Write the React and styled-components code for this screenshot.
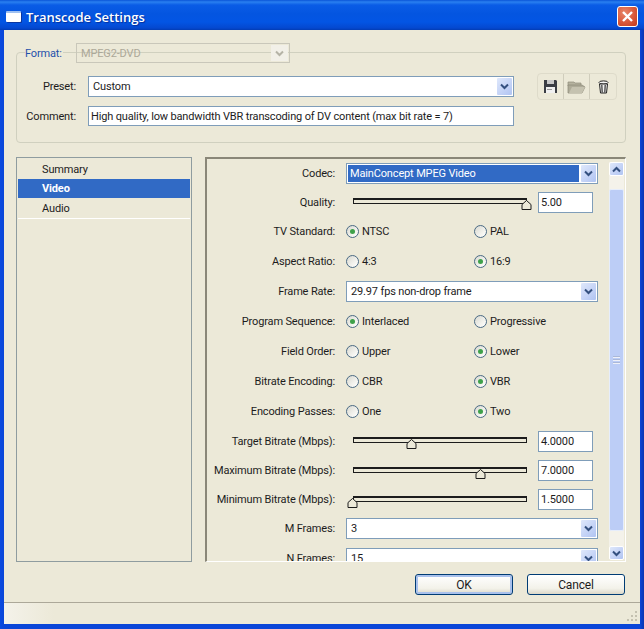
import React from 'react';
import styled, { createGlobalStyle } from 'styled-components';

const GlobalStyle = createGlobalStyle`
  * { box-sizing: border-box; }
  html, body { margin: 0; padding: 0; background: #0a3fc4; }
  body { font-family: Roboto, "Liberation Sans", Arial, sans-serif; font-size: 11px; letter-spacing: -0.15px; color: #1c1c1c; }
`;

const Window = styled.div`
  width: 644px;
  height: 629px;
  display: flex;
  flex-direction: column;
  overflow: hidden;
  background: linear-gradient(90deg, #0a4ae0 0, #0a46d8 4px, #0a46d8 640px, #0a36b0 644px);
`;

const TitleBar = styled.div`
  height: 30px;
  flex: none;
  display: flex;
  align-items: center;
  padding: 3px 6px 0 6px;
  background: linear-gradient(180deg, #0a55d8 0, #2a80f0 2px, #0a5ce6 5px, #0455e0 14px, #0355e4 22px, #0448d0 28px, #033cb4 30px);
`;

const TitleIcon = styled.div`
  width: 15px;
  height: 11px;
  margin-top: -1px;
  background: #fff;
  border-top: 2px solid #9fc0f0;
  border-radius: 1px;
  box-shadow: 1px 1px 0 #0a36a0;
`;

const TitleText = styled.div`
  margin-left: 5px;
  flex: 1;
  font-family: "Open Sans", sans-serif;
  font-weight: 600;
  font-size: 13px;
  letter-spacing: 0;
  color: #fff;
  text-shadow: 1px 1px 1px #06309a;
`;

const CloseButton = styled.div`
  width: 21px;
  height: 21px;
  border: 1px solid #fff;
  border-radius: 3px;
  background: radial-gradient(circle at 35% 30%, #e8876a 0, #d9583a 55%, #bf3a1c 100%);
  display: flex;
  align-items: center;
  justify-content: center;
`;

const Client = styled.div`
  flex: 1;
  margin: 0 4px 5px 4px;
  display: flex;
  flex-direction: column;
  padding-top: 22px;
  background: #ece9d8;
`;

const Group = styled.div`
  height: 91px;
  margin: 0 14px 0 12px;
  flex: none;
  border: 1px solid #d0d0bf;
  border-radius: 4px;
  display: flex;
  flex-direction: column;
`;

const FormatRow = styled.div`
  height: 20px;
  margin-top: -10px;
  padding-left: 8px;
  display: flex;
  align-items: center;
`;

const FormatLabel = styled.div`
  width: 51px;
  color: #1f50ab;
`;

const FormatLabelText = styled.span`
  background: #ece9d8;
  padding-right: 1px;
`;

const DisabledCombo = styled.div`
  width: 214px;
  height: 20px;
  border: 1px solid #c9c7ba;
  display: flex;
  align-items: center;
  justify-content: space-between;
  padding: 0 1px 0 4px;
  color: #aca899;
`;

const DisabledArrow = styled.div`
  width: 17px;
  height: 16px;
  background: #f2f0e8;
  display: flex;
  align-items: center;
  justify-content: center;
`;

const GroupBody = styled.div`
  display: flex;
  margin-top: 13px;
`;

const GroupFields = styled.div`
  display: flex;
  flex-direction: column;
  gap: 9px;
`;

const FieldRow = styled.div`
  display: flex;
  align-items: center;
`;

const GroupLabel = styled.div`
  width: 59px;
  margin-right: 12px;
  text-align: right;
`;

const Combo = styled.div`
  width: ${(p) => p.$w || 252}px;
  height: ${(p) => p.$h || 21}px;
  flex: none;
  background: #fff;
  border: 1px solid #7f9db9;
  display: flex;
  align-items: center;
  padding: 1px;
`;

const ComboText = styled.div`
  flex: 1;
  height: 100%;
  margin-right: 2px;
  padding-left: ${(p) => (p.$selected ? 2 : 3)}px;
  display: flex;
  align-items: center;
  white-space: nowrap;
  background: ${(p) => (p.$selected ? '#316ac5' : 'transparent')};
  color: ${(p) => (p.$selected ? '#fff' : '#1c1c1c')};
`;

const ComboArrow = styled.div`
  width: 15px;
  height: 100%;
  flex: none;
  border-radius: 1px;
  background: linear-gradient(135deg, #dfe8fb 0, #c3d2f6 60%, #b0c4f2 100%);
  display: flex;
  align-items: center;
  justify-content: center;
`;

const TextBox = styled.div`
  width: ${(p) => p.$w || 426}px;
  height: ${(p) => p.$h || 20}px;
  flex: none;
  background: #fff;
  border: 1px solid #7f9db9;
  padding-left: 2px;
  display: flex;
  align-items: center;
  white-space: nowrap;
`;

const Toolbar = styled.div`
  width: 80px;
  height: 27px;
  margin: -3px 0 0 23px;
  display: flex;
  border: 1px solid #dedbca;
  border-radius: 4px;
`;

const ToolButton = styled.div`
  width: 26px;
  flex: none;
  display: flex;
  align-items: center;
  justify-content: center;
  &:first-child { width: 25px; }
  &:last-child { width: 27px; }
  & + & { border-left: 1px solid #d0cdbc; }
`;

const Main = styled.div`
  height: 405px;
  flex: none;
  margin: 14px 14px 0 12px;
  display: flex;
  gap: 13px;
`;

const NavList = styled.div`
  width: 176px;
  flex: none;
  border: 1px solid #8f9c9f;
  padding: 1px;
`;

const NavItem = styled.div`
  height: ${(p) => p.$h || 20}px;
  padding-left: 24px;
  padding-top: ${(p) => (p.$last ? 1 : 0)}px;
  display: flex;
  align-items: center;
  font-weight: ${(p) => (p.$active ? 700 : 400)};
  color: ${(p) => (p.$active ? '#fff' : '#1c1c1c')};
  background: ${(p) => (p.$active ? '#316ac5' : 'transparent')};
  border-bottom: ${(p) => (p.$last ? '1px solid #fff' : 'none')};
`;

const Panel = styled.div`
  flex: 1;
  display: flex;
  overflow: hidden;
  border-top: 2px solid #8a8778;
  border-left: 2px solid #8a8778;
  border-bottom: 1px solid #fff;
  border-right: 1px solid #fff;
`;

const PanelContent = styled.div`
  width: 391px;
  flex: none;
  overflow: hidden;
`;

const Row = styled.div`
  height: ${(p) => p.$h || 30}px;
  display: flex;
  align-items: center;
`;

const RowLabel = styled.div`
  width: 128px;
  margin-right: 11px;
  flex: none;
  text-align: right;
  white-space: nowrap;
`;

const RadioColumns = styled.div`
  display: grid;
  grid-template-columns: 128px 128px;
`;

const RadioOption = styled.div`
  display: flex;
  align-items: center;
  gap: 3px;
`;

const RadioCircle = styled.div`
  width: 13px;
  height: 13px;
  border-radius: 50%;
  border: 1px solid #4a6a84;
  background: linear-gradient(135deg, #d8d8d0 0, #f6f6f2 70%, #fff 100%);
  display: flex;
  align-items: center;
  justify-content: center;
  &::after {
    content: '';
    display: ${(p) => (p.$on ? 'block' : 'none')};
    width: 5px;
    height: 5px;
    border-radius: 50%;
    background: #3fa14a;
  }
`;

const SliderWrap = styled.div`
  display: flex;
  align-items: center;
  width: 252px;
`;

const SliderTrack = styled.div`
  position: relative;
  width: 174px;
  height: 6px;
  margin: -2px 11px 0 7px;
  flex: none;
  border: 1px solid #1c1c1c;
  border-top-width: 2px;
  background: #ece9d8;
`;

const SliderThumb = styled.svg`
  position: absolute;
  top: 0;
  width: 11px;
  height: 10px;
  margin-left: -5px;
`;

const ScrollBar = styled.div`
  width: 15px;
  flex: none;
  margin: 3px 0 2px 11px;
  display: flex;
  flex-direction: column;
  background: #f4f2ea;
`;

const ScrollButton = styled.div`
  height: 14px;
  flex: none;
  border: 1px solid #fff;
  border-radius: 2px;
  background: linear-gradient(135deg, #dfe8fb 0, #c3d2f6 60%, #b0c4f2 100%);
  display: flex;
  align-items: center;
  justify-content: center;
`;

const ScrollThumb = styled.div`
  height: 342px;
  margin: 13px 0 15px;
  flex: none;
  border-radius: 2px;
  border: 1px solid #e6edfb;
  background: #bccdf6;
  display: flex;
  align-items: center;
  justify-content: center;
`;

const Grip = styled.div`
  width: 7px;
  height: 8px;
  background-image: repeating-linear-gradient(0deg, #eef0f8 0 1px, #aab8d8 1px 2px, transparent 2px 3px);
`;

const Footer = styled.div`
  flex: none;
  margin-top: 12px;
  padding-right: 15px;
  display: flex;
  justify-content: flex-end;
  gap: 14px;
`;

const DialogButton = styled.div`
  width: 98px;
  height: 21px;
  border: 1px solid #003c74;
  border-radius: 3px;
  background: linear-gradient(180deg, #fff 0, #f3f2ea 70%, #dcd8c8 100%);
  box-shadow: ${(p) => (p.$default ? 'inset 0 0 0 2px #a9c1ec' : 'none')};
  display: flex;
  align-items: center;
  justify-content: center;
  font-size: 12px;
`;

const StatusBar = styled.div`
  flex: 1;
  margin-top: 7px;
  border-top: 1px solid #aca899;
  background: linear-gradient(90deg, #f4f2ea 0, #ece9d8 50px);
  display: flex;
  justify-content: flex-end;
  align-items: flex-end;
  padding: 0 2px 2px 0;
`;

const GripDots = styled.svg`
  width: 12px;
  height: 12px;
`;

const Chevron = ({ color = '#34507f', up }) => (
  <svg width="9" height="7" viewBox="0 0 9 7">
    <path d={up ? 'M1 5.5 L4.5 2 L8 5.5' : 'M1 1.5 L4.5 5 L8 1.5'} fill="none" stroke={color} strokeWidth="2" />
  </svg>
);

const SaveIcon = () => (
  <svg width="15" height="15" viewBox="0 0 15 15">
    <path d="M1 1 H13 L14 2 V14 H1 Z" fill="#3a3d44" />
    <rect x="4" y="1" width="7" height="4" fill="#c8c8c8" />
    <rect x="3" y="8" width="9" height="6" fill="#f0f0f0" />
    <rect x="4" y="10" width="5" height="1" fill="#999" />
  </svg>
);

const FolderIcon = () => (
  <svg width="19" height="14" viewBox="0 0 19 14">
    <path d="M1 2 H7 L8 3 H14 V6 H1 Z" fill="#b5b29f" stroke="#8f8c7c" strokeWidth="0.7" />
    <path d="M1 13 V5 H15 L18 7 L15 13 Z" fill="#aeab98" stroke="#8a8777" strokeWidth="0.7" />
    <path d="M2 13 L5 7 H18 L15 13 Z" fill="#c5c2b0" />
  </svg>
);

const TrashIcon = () => (
  <svg width="11" height="14" viewBox="0 0 11 14">
    <ellipse cx="5.5" cy="2.5" rx="4.5" ry="1.6" fill="#f4f4f4" stroke="#222" strokeWidth="1" />
    <path d="M1.5 4 L2.5 13 H8.5 L9.5 4 Z" fill="#f0f0f0" stroke="#222" strokeWidth="1" />
    <path d="M3.8 5 L4.2 12.5 M7.2 5 L6.8 12.5" stroke="#333" strokeWidth="1.2" />
  </svg>
);

const RadioRow = ({ label, options, value, h }) => (
  <Row $h={h}>
    <RowLabel>{label}</RowLabel>
    <RadioColumns>
      {options.map((o) => (
        <RadioOption key={o}>
          <RadioCircle $on={o === value} />
          {o}
        </RadioOption>
      ))}
    </RadioColumns>
  </Row>
);

const SliderRow = ({ label, pos, value, h }) => (
  <Row $h={h}>
    <RowLabel>{label}</RowLabel>
    <SliderWrap>
      <SliderTrack>
        <SliderThumb viewBox="0 0 11 10" style={{ left: `${pos * 100}%` }}>
          <path d="M5.5 0.5 L10 4.5 V9.5 H1 V4.5 Z" fill="#ece9d8" stroke="#1c1c1c" />
        </SliderThumb>
      </SliderTrack>
      <TextBox $w={55} $h={21}>{value}</TextBox>
    </SliderWrap>
  </Row>
);

const ComboRow = ({ label, value, selected, h }) => (
  <Row $h={h}>
    <RowLabel>{label}</RowLabel>
    <Combo>
      <ComboText $selected={selected}>{value}</ComboText>
      <ComboArrow><Chevron /></ComboArrow>
    </Combo>
  </Row>
);

export default function App() {
  return (
    <>
      <GlobalStyle />
      <Window>
        <TitleBar>
          <TitleIcon />
          <TitleText>Transcode Settings</TitleText>
          <CloseButton>
            <svg width="13" height="13" viewBox="0 0 13 13">
              <path d="M2 2 L11 11 M11 2 L2 11" stroke="#fff" strokeWidth="2.4" />
            </svg>
          </CloseButton>
        </TitleBar>
        <Client>
          <Group>
            <FormatRow>
              <FormatLabel><FormatLabelText>Format:</FormatLabelText></FormatLabel>
              <DisabledCombo>
                MPEG2-DVD
                <DisabledArrow><Chevron color="#b5b3a6" /></DisabledArrow>
              </DisabledCombo>
            </FormatRow>
            <GroupBody>
              <GroupFields>
                <FieldRow>
                  <GroupLabel>Preset:</GroupLabel>
                  <Combo $w={426}>
                    <ComboText>Custom</ComboText>
                    <ComboArrow><Chevron /></ComboArrow>
                  </Combo>
                </FieldRow>
                <FieldRow>
                  <GroupLabel>Comment:</GroupLabel>
                  <TextBox>High quality, low bandwidth VBR transcoding of DV content (max bit rate = 7)</TextBox>
                </FieldRow>
              </GroupFields>
              <Toolbar>
                <ToolButton><SaveIcon /></ToolButton>
                <ToolButton><FolderIcon /></ToolButton>
                <ToolButton><TrashIcon /></ToolButton>
              </Toolbar>
            </GroupBody>
          </Group>
          <Main>
            <NavList>
              <NavItem>Summary</NavItem>
              <NavItem $active $h={19}>Video</NavItem>
              <NavItem $last $h={21}>Audio</NavItem>
            </NavList>
            <Panel>
              <PanelContent>
                <ComboRow h={28} label="Codec:" value="MainConcept MPEG Video" selected />
                <SliderRow label="Quality:" pos={1} value="5.00" />
                <RadioRow h={29} label="TV Standard:" options={['NTSC', 'PAL']} value="NTSC" />
                <RadioRow label="Aspect Ratio:" options={['4:3', '16:9']} value="16:9" />
                <ComboRow h={31} label="Frame Rate:" value="29.97 fps non-drop frame" />
                <RadioRow h={29} label="Program Sequence:" options={['Interlaced', 'Progressive']} value="Interlaced" />
                <RadioRow label="Field Order:" options={['Upper', 'Lower']} value="Lower" />
                <RadioRow label="Bitrate Encoding:" options={['CBR', 'VBR']} value="VBR" />
                <RadioRow label="Encoding Passes:" options={['One', 'Two']} value="Two" />
                <SliderRow label="Target Bitrate (Mbps):" pos={0.33} value="4.0000" />
                <SliderRow h={29} label="Maximum Bitrate (Mbps):" pos={0.733} value="7.0000" />
                <SliderRow h={29} label="Minimum Bitrate (Mbps):" pos={-0.012} value="1.5000" />
                <ComboRow h={29} label="M Frames:" value="3" />
                <ComboRow label="N Frames:" value="15" />
              </PanelContent>
              <ScrollBar>
                <ScrollButton><Chevron up /></ScrollButton>
                <ScrollThumb><Grip /></ScrollThumb>
                <ScrollButton><Chevron /></ScrollButton>
              </ScrollBar>
            </Panel>
          </Main>
          <Footer>
            <DialogButton $default>OK</DialogButton>
            <DialogButton>Cancel</DialogButton>
          </Footer>
          <StatusBar>
            <GripDots viewBox="0 0 12 12">
              <path d="M9 1 h2 v2 h-2 z M5 5 h2 v2 h-2 z M9 5 h2 v2 h-2 z M1 9 h2 v2 h-2 z M5 9 h2 v2 h-2 z M9 9 h2 v2 h-2 z" fill="#c4c1b0" />
            </GripDots>
          </StatusBar>
        </Client>
      </Window>
    </>
  );
}
